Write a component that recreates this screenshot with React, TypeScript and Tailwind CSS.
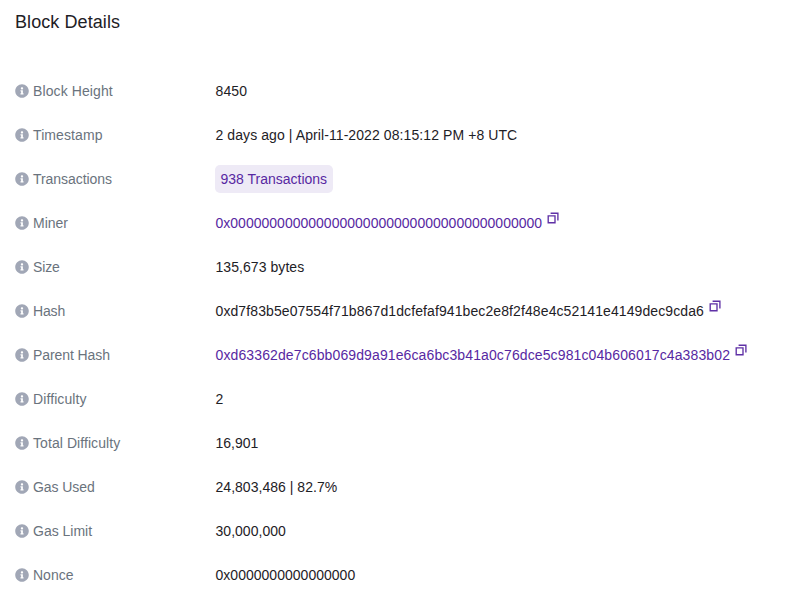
import React from "react";

function InfoIcon() {
  return (
    <svg viewBox="0 0 512 512" className="size-[14px] shrink-0 fill-[#a1a7b6]">
      <path d="M256 8C119.043 8 8 119.083 8 256c0 136.997 111.043 248 248 248s248-111.003 248-248C504 119.083 392.957 8 256 8zm0 110c23.196 0 42 18.804 42 42s-18.804 42-42 42-42-18.804-42-42 18.804-42 42-42zm56 254c0 6.627-5.373 12-12 12h-88c-6.627 0-12-5.373-12-12v-24c0-6.627 5.373-12 12-12h12v-64h-12c-6.627 0-12-5.373-12-12v-24c0-6.627 5.373-12 12-12h64c6.627 0 12 5.373 12 12v100h12c6.627 0 12 5.373 12 12v24z" />
    </svg>
  );
}

function CopyIcon() {
  return (
    <svg viewBox="0 0 12 12" className="mb-[10px] ml-[5px] size-3 shrink-0 fill-none stroke-[#5f30a6]" strokeWidth="1.35">
      <path d="M1.2 3.9h6.8v6.8H1.2zM3.6 1.2h7.3v7.4" />
    </svg>
  );
}

type Row = {
  label: string;
  labelTracking?: string;
  value: string;
  tracking?: string;
  link?: boolean;
  copy?: boolean;
  badge?: boolean;
};

const rows: Row[] = [
  { label: "Block Height", labelTracking: "tracking-[0.1px]", value: "8450", tracking: "tracking-[0.1px]" },
  { label: "Timestamp", labelTracking: "tracking-[0.1px]", value: "2 days ago | April-11-2022 08:15:12 PM +8 UTC", tracking: "tracking-[0.085px]" },
  { label: "Transactions", labelTracking: "tracking-[-0.06px]", value: "938 Transactions", badge: true },
  { label: "Miner", value: "0x0000000000000000000000000000000000000000", link: true, copy: true, tracking: "tracking-[0.01px]" },
  { label: "Size", labelTracking: "tracking-[-0.15px]", value: "135,673 bytes", tracking: "tracking-[0.06px]" },
  { label: "Hash", labelTracking: "tracking-[-0.15px]", value: "0xd7f83b5e07554f71b867d1dcfefaf941bec2e8f2f48e4c52141e4149dec9cda6", copy: true, tracking: "tracking-[0.1px]" },
  { label: "Parent Hash", labelTracking: "tracking-[-0.08px]", value: "0xd63362de7c6bb069d9a91e6ca6bc3b41a0c76dce5c981c04b606017c4a383b02", link: true, copy: true, tracking: "tracking-[0.117px]" },
  { label: "Difficulty", labelTracking: "tracking-[0.1px]", value: "2" },
  { label: "Total Difficulty", labelTracking: "tracking-[0.07px]", value: "16,901" },
  { label: "Gas Used", labelTracking: "tracking-[-0.08px]", value: "24,803,486 | 82.7%", tracking: "tracking-[0.03px]" },
  { label: "Gas Limit", value: "30,000,000", tracking: "tracking-[0.03px]" },
  { label: "Nonce", value: "0x0000000000000000", tracking: "tracking-[0.02px]" },
];

export default function App() {
  return (
    <main className="h-[596px] overflow-hidden bg-white font-['Liberation_Sans',Arial,sans-serif] text-sm text-[#1e2126]">
      <h1 className="px-[15px] pt-2 text-lg leading-7 tracking-[0.08px]">Block Details</h1>
      <dl className="pt-[33px]">
        {rows.map((row) => (
          <div key={row.label} className="flex h-11 items-center pl-[15px]">
            <dt className="flex w-[200.5px] shrink-0 items-center gap-1 text-[#6a737d]">
              <InfoIcon />
              <span className={row.labelTracking}>{row.label}</span>
            </dt>
            <dd className="flex items-center whitespace-nowrap">
              {row.badge ? (
                <span className="-ml-[0.5px] flex h-7 items-center rounded-[5px] bg-[#eeeaf6] px-[5.5px] text-[#5728a2]">{row.value}</span>
              ) : (
                <span className={`${row.link ? "text-[#5728a2]" : ""} ${row.tracking ?? ""}`}>{row.value}</span>
              )}
              {row.copy && <CopyIcon />}
            </dd>
          </div>
        ))}
      </dl>
    </main>
  );
}
